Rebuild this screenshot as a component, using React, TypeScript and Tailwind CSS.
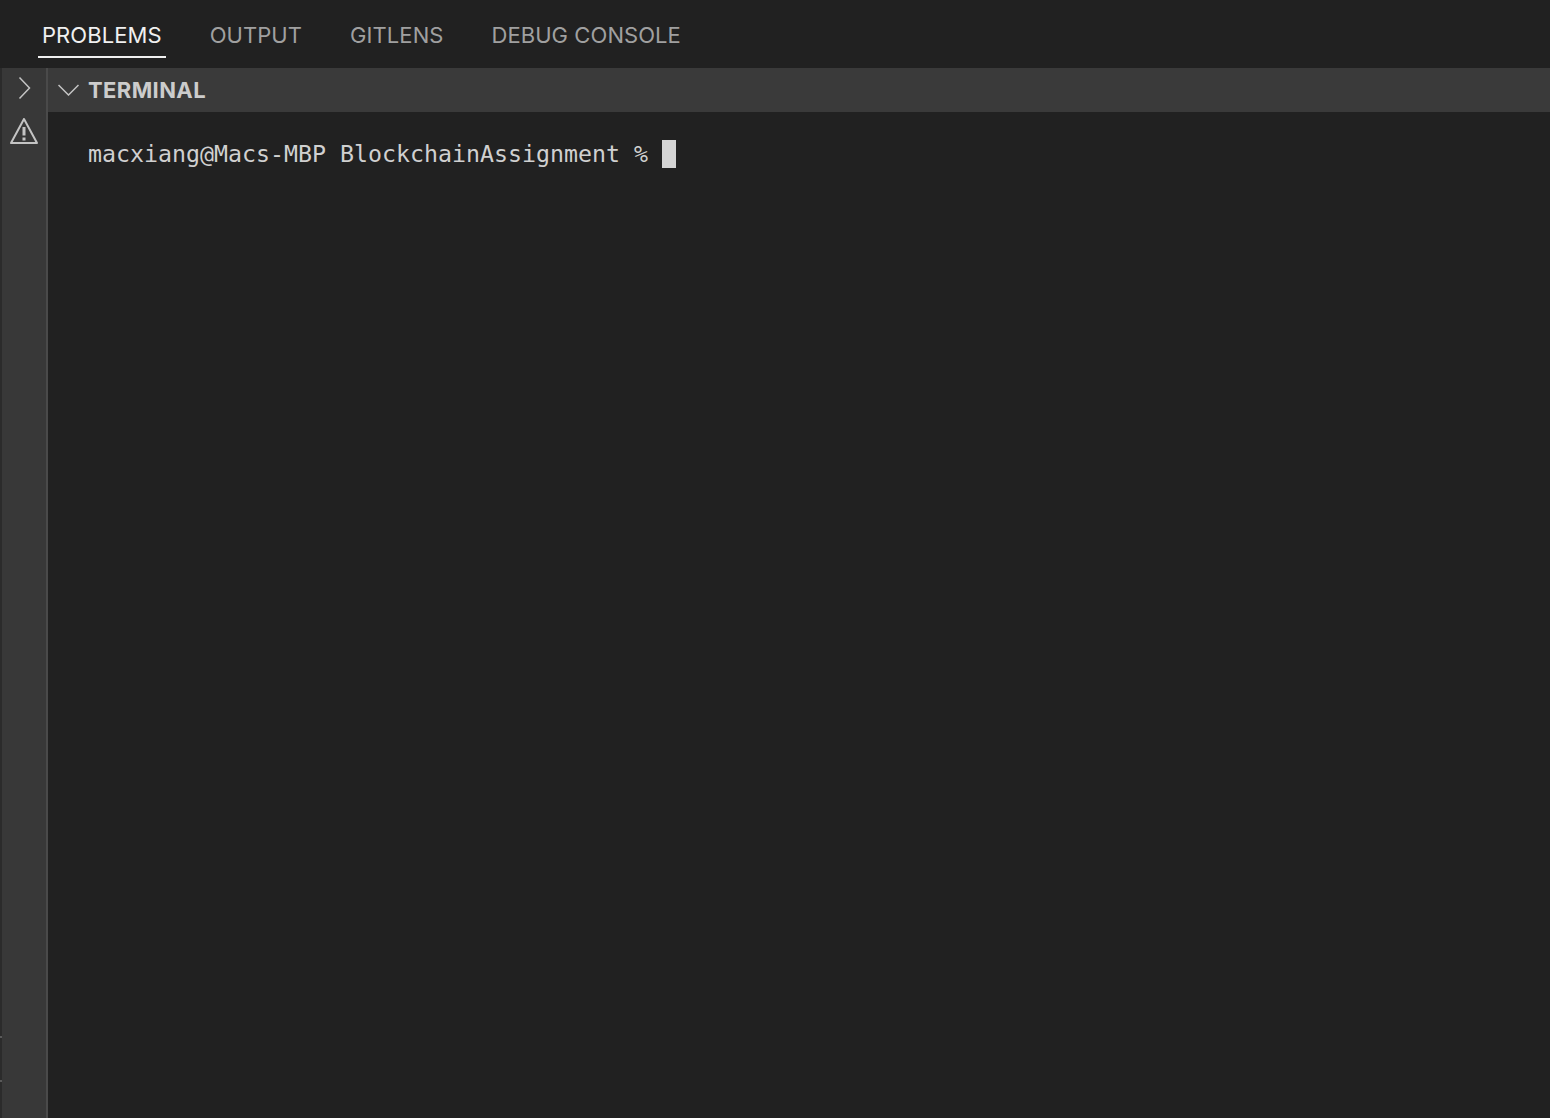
const tabs = ['PROBLEMS', 'OUTPUT', 'GITLENS', 'DEBUG CONSOLE'];

export default function App() {
  return (
    <div className="flex h-[1118px] w-[1550px] flex-col overflow-hidden bg-[#212121] font-['Inter',sans-serif]">
      {/* panel tabs */}
      <div className="flex h-[68px] shrink-0 gap-[40px] pl-[38px] pt-[20px]">
        {tabs.map((tab, index) => (
          <div
            key={tab}
            className={
              index === 0
                ? 'h-[38px] border-b-2 border-[#f0f0f0] px-1 text-[22px] leading-[31px] tracking-[0.07px] text-[#f0f0f0]'
                : 'h-[38px] px-1 text-[22px] leading-[31px] tracking-[0.07px] text-[#a0a0a0]'
            }
          >
            {tab}
          </div>
        ))}
      </div>

      <div className="flex min-h-0 flex-1">
        {/* collapsed sidebar */}
        <div className="relative flex w-[48px] shrink-0 flex-col items-center border-l-2 border-r-2 border-l-[#2b2b2b] border-r-[#4a4a4a] bg-[#383838] pt-[8px]">
          <svg width="24" height="24" viewBox="0 0 24 24" fill="none" stroke="#c4c4c4" strokeWidth="1.5">
            <path d="M7.5 1.5 17.5 12 7.5 22.500" />
          </svg>
          <svg className="mt-[17px]" width="30" height="28" viewBox="0 0 30 28" fill="none" stroke="#c4c4c4" strokeWidth="2">
            <path d="M15 2 2 26H28Z" strokeLinejoin="round" />
            <path d="M15 10V18.500M15 20.500V23.500" strokeWidth="3" />
          </svg>
          {/* sash ticks on the window edge */}
          <div className="absolute left-[-2px] top-[968px] h-[2px] w-[2px] bg-[#5a5a5a]" />
          <div className="absolute left-[-2px] top-[1012px] h-[2px] w-[2px] bg-[#5a5a5a]" />
        </div>

        <div className="flex min-w-0 flex-1 flex-col">
          {/* terminal section header */}
          <div className="flex h-[44px] shrink-0 items-center gap-[9px] bg-[#3a3a3a] pl-[10px]">
            <svg width="21" height="12" viewBox="0 0 21 12" fill="none" stroke="#c4c4c4" strokeWidth="1.5">
              <path d="M.5 1 10.500 11 20.500 1" />
            </svg>
            <span className="text-[22px] font-bold leading-none tracking-[0.4px] text-[#cccccc]">TERMINAL</span>
          </div>

          {/* terminal prompt */}
          <div className="flex items-center pl-[40px] pt-[28px] font-['DejaVu_Sans_Mono',monospace] text-[23.25px] leading-[28px] text-[#d0d0d0]">
            <span className="whitespace-pre">macxiang@Macs-MBP BlockchainAssignment % </span>
            <span className="h-[28px] w-[14px] bg-[#d4d4d4]" />
          </div>
        </div>
      </div>
    </div>
  );
}
